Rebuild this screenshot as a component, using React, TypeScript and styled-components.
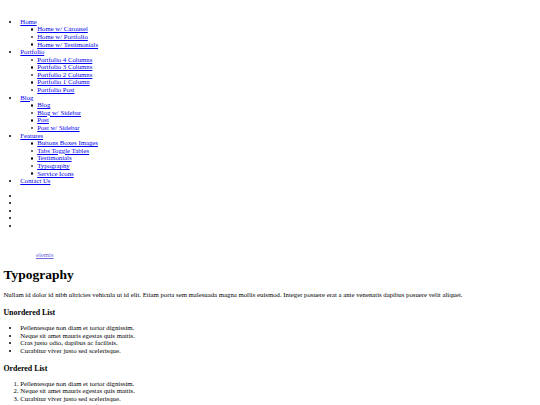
import React from "react";
import styled, { createGlobalStyle } from "styled-components";

// the reference is a plain unstyled page shot at ~0.42 scale,
// so every browser default below is multiplied by that factor
const GlobalStyle = createGlobalStyle`
  html, body {
    background: #ffffff;
  }
  body {
    margin: 3.4px;
    font-family: "Liberation Serif", "Times New Roman", serif;
    font-size: 6.75px;
    line-height: 7.6px;
    color: #000000;
  }
  a {
    color: #0000ee;
  }
`;

const Header = styled.div``;

const TopBar = styled.div`
  height: 7.6px;
`;

const List = styled.ul`
  margin: 6.75px 0;
  padding-left: 16.9px;
  list-style-type: disc;
`;

const SubList = styled.ul`
  margin: 0;
  padding-left: 16.9px;
  list-style: none;
`;

const SubItem = styled.li`
  &::before {
    content: "";
    display: inline-block;
    box-sizing: border-box;
    width: 2.6px;
    height: 2.6px;
    border: 0.6px solid #000;
    border-radius: 50%;
    margin-left: -6.6px;
    margin-right: 4px;
    vertical-align: 0.6px;
  }
`;

const Logo = styled.div`
  margin-top: 21.4px;
  padding-left: 32.6px;
  a {
    color: #6b6bd8;
  }
`;

const Title = styled.h1`
  font-size: 13.5px;
  line-height: 15.5px;
  font-weight: bold;
  margin: 8px 0 9px;
`;

const Para = styled.p`
  margin: 6.75px 0;
`;

const SubTitle = styled.h3`
  font-size: 7.9px;
  line-height: 9.1px;
  font-weight: bold;
  margin: 9.4px 0 6.9px;
`;

const Ordered = styled.ol`
  margin: 6.75px 0;
  padding-left: 16.9px;
`;

const nav: { label: string; children: string[] }[] = [
  { label: "Home", children: ["Home w/ Carousel", "Home w/ Portfolio", "Home w/ Testimonials"] },
  {
    label: "Portfolio",
    children: ["Portfolio 4 Columns", "Portfolio 3 Columns", "Portfolio 2 Columns", "Portfolio 1 Column", "Portfolio Post"],
  },
  { label: "Blog", children: ["Blog", "Blog w/ Sidebar", "Post", "Post w/ Sidebar"] },
  {
    label: "Features",
    children: ["Buttons Boxes Images", "Tabs Toggle Tables", "Testimonials", "Typography", "Service Icons"],
  },
  { label: "Contact Us", children: [] },
];

const App = () => {
  return (
    <>
      <GlobalStyle />
      <Header>
        <TopBar />
        <List>
          {nav.map((item) => (
            <li key={item.label}>
              <a href="#">{item.label}</a>
              {item.children.length > 0 && (
                <SubList>
                  {item.children.map((c) => (
                    <SubItem key={c}>
                      <a href="#">{c}</a>
                    </SubItem>
                  ))}
                </SubList>
              )}
            </li>
          ))}
        </List>
        <List>
          <li></li>
          <li></li>
          <li></li>
          <li></li>
          <li></li>
        </List>
        <Logo>
          <a href="#">elemis</a>
        </Logo>
      </Header>
      <Title>Typography</Title>
      <Para>
        Nullam id dolor id nibh ultricies vehicula ut id elit. Etiam porta sem malesuada magna mollis euismod.
        Integer posuere erat a ante venenatis dapibus posuere velit aliquet.
      </Para>
      <SubTitle>Unordered List</SubTitle>
      <List>
        <li>Pellentesque non diam et tortor dignissim.</li>
        <li>Neque sit amet mauris egestas quis mattis.</li>
        <li>Cras justo odio, dapibus ac facilisis.</li>
        <li>Curabitur viver justo sed scelerisque.</li>
      </List>
      <SubTitle>Ordered List</SubTitle>
      <Ordered>
        <li>Pellentesque non diam et tortor dignissim.</li>
        <li>Neque sit amet mauris egestas quis mattis.</li>
        <li>Curabitur viver justo sed scelerisque.</li>
        <li>Cras justo odio, dapibus ac facilisis.</li>
      </Ordered>
    </>
  );
};

export default App;
